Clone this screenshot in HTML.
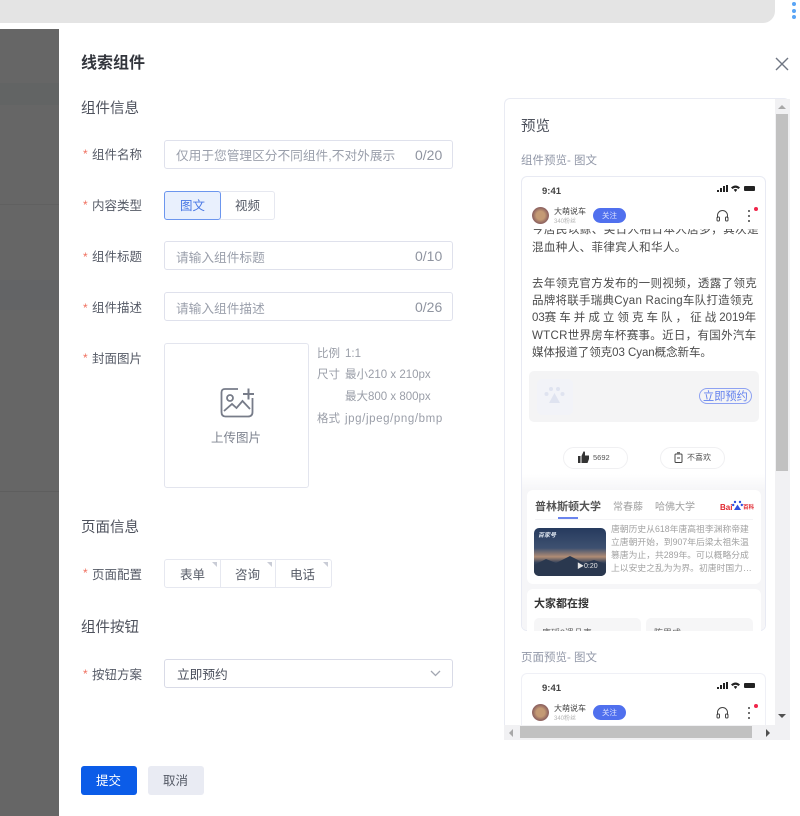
<!DOCTYPE html>
<html lang="zh"><head><meta charset="utf-8"><title>线索组件</title>
<style>
html,body{margin:0;padding:0;background:#fff}
body{position:relative;width:800px;height:816px;overflow:hidden;font-family:"Liberation Sans","Noto Sans CJK SC",sans-serif;color:#4a4f5c}
.a{position:absolute}
.t{position:absolute;white-space:nowrap;line-height:20px}
.lab{font-size:12.5px;color:#555a66;left:92px}
.star{position:absolute;left:83px;font-size:12px;color:#f0705f;line-height:20px}
.h{font-size:14.5px;color:#4d515c;left:81px}
.inp{position:absolute;left:164px;width:287px;height:27px;border:1px solid #dfe1ec;border-radius:3px;background:#fff}
.ph{position:absolute;font-size:12.7px;color:#9a9fab;line-height:20px;white-space:nowrap}
.cnt{position:absolute;font-size:14px;color:#8f94a0;line-height:20px}
.meta{font-size:11.5px;color:#9a9ea8}
.art{font-size:11.5px;color:#4c4c4c;line-height:17px}
#pv{position:absolute;left:0;top:0;width:800px;height:816px;filter:blur(.35px)}
</style></head><body>
<!-- top bar -->
<div class="a" style="left:-20px;top:-20px;width:795px;height:43px;background:#e4e4e4;border-radius:0 12px 12px 0"></div>
<div class="a" style="left:792px;top:2px;width:4px;height:4px;border-radius:50%;background:#5aa5f5"></div>
<div class="a" style="left:792px;top:8.5px;width:4px;height:4px;border-radius:50%;background:#5aa5f5"></div>
<div class="a" style="left:792px;top:15px;width:4px;height:4px;border-radius:50%;background:#5aa5f5"></div>
<!-- overlay -->
<div class="a" style="left:0;top:29px;width:59px;height:787px;background:#666"></div>
<div class="a" style="left:0;top:83px;width:59px;height:22px;background:#626464"></div>
<div class="a" style="left:0;top:280px;width:59px;height:30px;background:#636466"></div>
<div class="a" style="left:0;top:204px;width:59px;height:1px;background:#606060"></div>
<div class="a" style="left:0;top:491px;width:59px;height:1px;background:#5e5e5e"></div>

<div class="t" style="left:81px;top:54px;font-size:16px;font-weight:700;color:#33363d">线索组件</div>
<svg class="a" style="left:775px;top:57px" width="14" height="14" viewBox="0 0 14 14"><path d="M1 1L13 13M13 1L1 13" stroke="#6f7683" stroke-width="1.4" fill="none"/></svg>

<div class="t h" style="top:99px">组件信息</div>
<div class="star" style="top:144px">*</div><div class="t lab" style="top:145px">组件名称</div>
<div class="inp" style="top:140px"></div>
<div class="ph" style="left:176px;top:146px">仅用于您管理区分不同组件,不对外展示</div>
<div class="cnt" style="left:415px;top:145px">0/20</div>

<div class="star" style="top:195px">*</div><div class="t lab" style="top:196px">内容类型</div>
<div class="a" style="left:220px;top:191px;width:54px;height:27px;border:1px solid #e6e8f0;border-left:0;border-radius:0 3px 3px 0"></div>
<div class="a" style="left:164px;top:191px;width:55px;height:27px;border:1px solid #6c96ee;border-radius:3px;background:#e9f0fd"></div>
<div class="t" style="left:180px;top:196px;font-size:12.5px;color:#4a78e4">图文</div>
<div class="t" style="left:235px;top:196px;font-size:12.5px;color:#555a66">视频</div>

<div class="star" style="top:247px">*</div><div class="t lab" style="top:247px">组件标题</div>
<div class="inp" style="top:241px"></div>
<div class="ph" style="left:176px;top:248px">请输入组件标题</div>
<div class="cnt" style="left:415px;top:246px">0/10</div>

<div class="star" style="top:298px">*</div><div class="t lab" style="top:298px">组件描述</div>
<div class="inp" style="top:292px"></div>
<div class="ph" style="left:176px;top:299px">请输入组件描述</div>
<div class="cnt" style="left:415px;top:297px">0/26</div>

<div class="star" style="top:348px">*</div><div class="t lab" style="top:349px">封面图片</div>
<div class="a" style="left:164px;top:343px;width:143px;height:143px;border:1px solid #e3e5ee;border-radius:3px"></div>
<svg class="a" style="left:219px;top:386px" width="36" height="34" viewBox="0 0 36 34" fill="none" stroke="#777c89" stroke-width="1.8"><path d="M19 3H6Q2.5 3 2.5 6.5V26Q2.5 30.5 6.5 30.5H29Q33.5 30.5 33.5 26V12"/><circle cx="11" cy="12" r="3"/><path d="M5 25L13 18L17.5 22L23.5 15L31 23"/><path d="M24 8H35M29.5 2.5V13.5" stroke-width="2"/></svg>
<div class="t" style="left:211px;top:428px;font-size:12.5px;color:#7f8490">上传图片</div>
<div class="t meta" style="left:317px;top:344px">比例</div><div class="t meta" style="left:345px;top:344px">1:1</div>
<div class="t meta" style="left:317px;top:365px">尺寸</div><div class="t meta" style="left:345px;top:365px">最小210 x 210px</div>
<div class="t meta" style="left:345px;top:387px">最大800 x 800px</div>
<div class="t meta" style="left:317px;top:409px">格式</div><div class="t meta" style="left:345px;top:409px;letter-spacing:.6px">jpg/jpeg/png/bmp</div>

<div class="t h" style="top:518px">页面信息</div>
<div class="star" style="top:563px">*</div><div class="t lab" style="top:565px">页面配置</div>
<div class="a" style="left:164px;top:559px;width:166px;height:27px;border:1px solid #e6e8f0;border-radius:3px"></div>
<div class="a" style="left:220px;top:560px;width:1px;height:27px;background:#e6e8f0"></div>
<div class="a" style="left:275px;top:560px;width:1px;height:27px;background:#e6e8f0"></div>
<div class="a" style="left:212px;top:562px;border-top:5px solid #c9ccd6;border-left:5px solid transparent"></div>
<div class="a" style="left:267px;top:562px;border-top:5px solid #c9ccd6;border-left:5px solid transparent"></div>
<div class="a" style="left:323px;top:562px;border-top:5px solid #c9ccd6;border-left:5px solid transparent"></div>
<div class="t" style="left:180px;top:565px;font-size:12.5px;color:#555a66">表单</div>
<div class="t" style="left:235px;top:565px;font-size:12.5px;color:#555a66">咨询</div>
<div class="t" style="left:290px;top:565px;font-size:12.5px;color:#555a66">电话</div>

<div class="t h" style="top:618px">组件按钮</div>
<div class="star" style="top:664px">*</div><div class="t lab" style="top:665px">按钮方案</div>
<div class="inp" style="top:659px;border-color:#d9dbe7"></div>
<div class="t" style="left:177px;top:665px;font-size:12.7px;color:#4a4f5c">立即预约</div>
<svg class="a" style="left:430px;top:670px" width="11" height="7" viewBox="0 0 11 7"><path d="M1 1L5.5 5.5L10 1" stroke="#a3a7b2" stroke-width="1.3" fill="none"/></svg>

<div class="a" style="left:81px;top:766px;width:56px;height:29px;background:#0b5ce8;border-radius:3px"></div>
<div class="t" style="left:96px;top:771px;font-size:12.5px;color:#fff">提交</div>
<div class="a" style="left:148px;top:766px;width:56px;height:29px;background:#e9ebf3;border-radius:3px"></div>
<div class="t" style="left:163px;top:771px;font-size:12.5px;color:#555a66">取消</div>

<!-- preview panel -->
<div id="pv">
<div class="a" style="left:504px;top:98px;width:286px;height:642px;border:1px solid #e9ebf3;border-right:0;border-bottom:0;border-radius:6px 6px 0 0;box-sizing:border-box;overflow:hidden">
 <div class="t" style="left:16px;top:18px;font-size:14.5px;color:#4d515c">预览</div>
 <div class="t" style="left:16px;top:52px;font-size:11.5px;color:#9298a8">组件预览- 图文</div>
 <div class="t" style="left:16px;top:549px;font-size:11.5px;color:#9298a8">页面预览- 图文</div>
</div>
<!-- phone 1 -->
<div class="a" style="left:521px;top:176px;width:245px;height:455px;border:1px solid #e8eaf3;border-radius:6px;box-sizing:border-box;background:#fff;overflow:hidden">
 <div class="t" style="left:20px;top:5px;font-size:9.5px;font-weight:700;color:#444">9:41</div>
 <div class="a" style="left:195px;top:13px;width:2px;height:2px;background:#222"></div>
 <div class="a" style="left:198px;top:11px;width:2px;height:4px;background:#222"></div>
 <div class="a" style="left:201px;top:9px;width:2px;height:6px;background:#222"></div>
 <div class="a" style="left:204px;top:8px;width:2px;height:7px;background:#222"></div>
 <svg class="a" style="left:209px;top:8px" width="9" height="7" viewBox="0 0 9 7"><path d="M0 2.5Q4.5 -1.5 9 2.5L7.5 4Q4.5 1.5 1.5 4ZM2.7 4.7Q4.5 3.3 6.3 4.7L4.5 7Z" fill="#222"/></svg>
 <div class="a" style="left:222px;top:9px;width:11px;height:5px;background:#222;border-radius:1px"></div>
 <div class="a" style="left:10px;top:30px;width:17px;height:17px;border-radius:50%;background:radial-gradient(circle at 50% 50%,#c49a74 0 35%,#8f6460 65%,#b69a9a 100%)"></div>
 <div class="t" style="left:32px;top:25px;font-size:8px;color:#444">大萌说车</div>
 <div class="t" style="left:32px;top:35px;font-size:6px;color:#b5b5b5">340粉丝</div>
 <div class="a" style="left:71px;top:31px;width:33px;height:15px;background:#5070ee;border-radius:8px"></div>
 <div class="t" style="left:80px;top:29px;font-size:7.5px;color:#dfe5ff">关注</div>
 <svg class="a" style="left:194px;top:32px" width="13" height="13" viewBox="0 0 13 13" fill="none" stroke="#444" stroke-width="1"><path d="M1.5 9V6.5a5 5 0 0 1 10 0V9"/><rect x="1" y="8" width="2.5" height="4" rx="1"/><rect x="9.5" y="8" width="2.5" height="4" rx="1"/></svg>
 <div class="a" style="left:226px;top:33px;width:2px;height:2px;background:#444;border-radius:50%"></div>
 <div class="a" style="left:226px;top:38px;width:2px;height:2px;background:#444;border-radius:50%"></div>
 <div class="a" style="left:226px;top:43px;width:2px;height:2px;background:#444;border-radius:50%"></div>
 <div class="a" style="left:232px;top:30px;width:4px;height:4px;background:#f0254a;border-radius:50%"></div>
 <div class="a" style="left:0;top:52px;width:245px;height:403px;overflow:hidden;background:#fff">
  <div class="t" style="left:10px;top:-9px;font-size:11.5px;color:#4c4c4c;letter-spacing:.45px">今居民以鲸、美日人相日本人居多，其次是</div>
  <div class="t" style="left:10px;top:9px;font-size:11.5px;color:#4c4c4c;letter-spacing:.4px">混血种人、菲律宾人和华人。</div>
 </div>
</div>
<div class="t art" style="left:532px;top:276px;letter-spacing:.35px">去年领克官方发布的一则视频，透露了领克</div>
<div class="t art" style="left:532px;top:293px;letter-spacing:.25px">品牌将联手瑞典Cyan Racing车队打造领克</div>
<div class="t art" style="left:532px;top:310px;letter-spacing:-.07px">03赛 车 并 成 立 领 克 车 队 ， 征 战 2019年</div>
<div class="t art" style="left:532px;top:328px;letter-spacing:.3px">WTCR世界房车杯赛事。近日，有国外汽车</div>
<div class="t art" style="left:532px;top:345px;letter-spacing:-.05px">媒体报道了领克03 Cyan概念新车。</div>
<div class="a" style="left:529px;top:371px;width:230px;height:51px;background:#f4f4f5;border-radius:5px"></div>
<div class="a" style="left:537px;top:379px;width:36px;height:36px;background:#f2f3f8;border-radius:5px"></div>
<svg class="a" style="left:544px;top:386px" width="21" height="19" viewBox="0 0 21 19" fill="#dfe3f0"><circle cx="7" cy="3" r="2"/><circle cx="14" cy="3" r="2"/><circle cx="2.5" cy="8" r="2"/><circle cx="18.5" cy="8" r="2"/><path d="M10.5 7L16 17H5Z"/></svg>
<div class="a" style="left:699px;top:388px;width:51px;height:14px;border:1px solid #8ea2f2;border-radius:8px"></div>
<div class="t" style="left:703px;top:388px;font-size:11.2px;color:#6280ee;line-height:18px">立即预约</div>
<div class="a" style="left:563px;top:447px;width:63px;height:20px;border:1px solid #f0f0f2;border-radius:11px"></div>
<div class="a" style="left:660px;top:447px;width:63px;height:20px;border:1px solid #f0f0f2;border-radius:11px"></div>
<svg class="a" style="left:578px;top:451px" width="11" height="12" viewBox="0 0 11 12"><path d="M0 5H2.5V12H0ZM3.5 5L5.5 .5Q7 0 7 2V4.5H11V8L9.5 12H3.5Z" fill="#333"/></svg>
<div class="t" style="left:593px;top:448px;font-size:7.5px;color:#555">5692</div>
<svg class="a" style="left:674px;top:452px" width="9" height="11" viewBox="0 0 9 11" fill="none" stroke="#444"><rect x="1" y="2" width="7" height="8.5" rx="1"/><path d="M3 .8H6M3 6H6"/></svg>
<div class="t" style="left:687px;top:448px;font-size:8px;color:#555">不喜欢</div>
<!-- bottom gray area of phone -->
<div class="a" style="left:522px;top:474px;width:243px;height:156px;background:linear-gradient(#fff,#f6f6f8 16px);border-radius:0 0 5px 5px"></div>
<div class="a" style="left:527px;top:490px;width:234px;height:94px;background:#fff;border-radius:6px"></div>
<div class="t" style="left:535px;top:497px;font-size:11px;font-weight:700;color:#555">普林斯顿大学</div>
<div class="t" style="left:613px;top:498px;font-size:10px;color:#a0a0a0">常春藤</div>
<div class="t" style="left:655px;top:498px;font-size:10px;color:#a0a0a0">哈佛大学</div>
<div class="t" style="left:720px;top:498px;font-size:8px;font-weight:700;color:#e0242c">Bai</div>
<svg class="a" style="left:732px;top:500px" width="11" height="11" viewBox="0 0 11 11" fill="#2c4fe0"><circle cx="3" cy="2" r="1.2"/><circle cx="8" cy="2" r="1.2"/><circle cx="1.2" cy="5" r="1.2"/><circle cx="9.8" cy="5" r="1.2"/><path d="M5.5 4.5L9 10H2Z"/></svg>
<div class="t" style="left:743px;top:498px;font-size:5.5px;font-weight:700;color:#e0242c">百科</div>
<div class="a" style="left:558px;top:517px;width:20px;height:2px;background:#6a84ee"></div>
<div class="a" style="left:535px;top:519px;width:218px;height:1px;background:#f4f4f6"></div>
<div class="a" style="left:534px;top:528px;width:72px;height:48px;border-radius:5px;overflow:hidden;background:linear-gradient(#263a5e 0,#3e5170 42%,#b08c74 60%,#34425a 72%,#1e2a3e 100%)">
 <svg class="a" style="left:0;top:0" width="72" height="48" viewBox="0 0 72 48"><path d="M0 37L12 31L22 35L36 28L50 35L60 32L72 36V48H0Z" fill="#2a384f"/></svg>
</div>
<div class="t" style="left:538px;top:526px;font-size:6px;font-style:italic;font-weight:700;color:#dfe6f0">百家号</div>
<div class="t" style="left:577px;top:557px;font-size:7px;color:#e6e6e6">▶0:20</div>
<div class="t" style="left:611px;top:523px;font-size:8.8px;line-height:13px;color:#a2a2a2">唐朝历史从618年唐高祖李渊称帝建</div>
<div class="t" style="left:611px;top:536px;font-size:8.8px;line-height:13px;color:#a2a2a2">立唐朝开始，到907年后梁太祖朱温</div>
<div class="t" style="left:611px;top:549px;font-size:8.8px;line-height:13px;color:#a2a2a2">篡唐为止，共289年。可以概略分成</div>
<div class="t" style="left:611px;top:562px;font-size:8.8px;line-height:13px;color:#a2a2a2">上以安史之乱为为界。初唐时国力…</div>
<div class="a" style="left:527px;top:589px;width:234px;height:42px;background:#fff;border-radius:6px 6px 0 0"></div>
<div class="t" style="left:534px;top:594px;font-size:11px;font-weight:700;color:#333">大家都在搜</div>
<div class="a" style="left:534px;top:618px;width:107px;height:13px;background:#f6f6f7;border-radius:5px 5px 0 0;overflow:hidden"><div class="t" style="left:8px;top:5px;font-size:9px;color:#666">康瑶3遗品表</div></div>
<div class="a" style="left:646px;top:618px;width:107px;height:13px;background:#f6f6f7;border-radius:5px 5px 0 0;overflow:hidden"><div class="t" style="left:8px;top:5px;font-size:9px;color:#666">陈思成</div></div>
<!-- phone 2 -->
<div class="a" style="left:521px;top:673px;width:245px;height:52px;border:1px solid #eff0f6;border-bottom:0;border-radius:6px 6px 0 0;box-sizing:border-box;background:#fff;overflow:hidden">
 <div class="t" style="left:20px;top:5px;font-size:9.5px;font-weight:700;color:#444">9:41</div>
 <div class="a" style="left:195px;top:13px;width:2px;height:2px;background:#222"></div>
 <div class="a" style="left:198px;top:11px;width:2px;height:4px;background:#222"></div>
 <div class="a" style="left:201px;top:9px;width:2px;height:6px;background:#222"></div>
 <div class="a" style="left:204px;top:8px;width:2px;height:7px;background:#222"></div>
 <svg class="a" style="left:209px;top:8px" width="9" height="7" viewBox="0 0 9 7"><path d="M0 2.5Q4.5 -1.5 9 2.5L7.5 4Q4.5 1.5 1.5 4ZM2.7 4.7Q4.5 3.3 6.3 4.7L4.5 7Z" fill="#222"/></svg>
 <div class="a" style="left:222px;top:9px;width:11px;height:5px;background:#222;border-radius:1px"></div>
 <div class="a" style="left:10px;top:30px;width:17px;height:17px;border-radius:50%;background:radial-gradient(circle at 50% 50%,#c49a74 0 35%,#8f6460 65%,#b69a9a 100%)"></div>
 <div class="t" style="left:32px;top:25px;font-size:8px;color:#444">大萌说车</div>
 <div class="t" style="left:32px;top:35px;font-size:6px;color:#b5b5b5">340粉丝</div>
 <div class="a" style="left:71px;top:31px;width:33px;height:15px;background:#5070ee;border-radius:8px"></div>
 <div class="t" style="left:80px;top:29px;font-size:7.5px;color:#dfe5ff">关注</div>
 <svg class="a" style="left:194px;top:32px" width="13" height="13" viewBox="0 0 13 13" fill="none" stroke="#444" stroke-width="1"><path d="M1.5 9V6.5a5 5 0 0 1 10 0V9"/><rect x="1" y="8" width="2.5" height="4" rx="1"/><rect x="9.5" y="8" width="2.5" height="4" rx="1"/></svg>
 <div class="a" style="left:226px;top:33px;width:2px;height:2px;background:#444;border-radius:50%"></div>
 <div class="a" style="left:226px;top:38px;width:2px;height:2px;background:#444;border-radius:50%"></div>
 <div class="a" style="left:226px;top:43px;width:2px;height:2px;background:#444;border-radius:50%"></div>
 <div class="a" style="left:232px;top:30px;width:4px;height:4px;background:#f0254a;border-radius:50%"></div>
</div>
</div>
<!-- scrollbars -->
<div class="a" style="left:775px;top:99px;width:15px;height:641px;background:#f1f1f3"></div>
<div class="a" style="left:776px;top:114px;width:12px;height:357px;background:#c1c1c1"></div>
<div class="a" style="left:778px;top:105px;border-bottom:4px solid #a8a8a8;border-left:4px solid transparent;border-right:4px solid transparent"></div>
<div class="a" style="left:778px;top:714px;border-top:4px solid #505050;border-left:4px solid transparent;border-right:4px solid transparent"></div>
<div class="a" style="left:504px;top:725px;width:271px;height:15px;background:#f1f1f3"></div>
<div class="a" style="left:520px;top:726px;width:232px;height:12px;background:#c1c1c1"></div>
<div class="a" style="left:509px;top:729px;border-right:4px solid #a8a8a8;border-top:4px solid transparent;border-bottom:4px solid transparent"></div>
<div class="a" style="left:766px;top:729px;border-left:4px solid #505050;border-top:4px solid transparent;border-bottom:4px solid transparent"></div>
</body></html>
